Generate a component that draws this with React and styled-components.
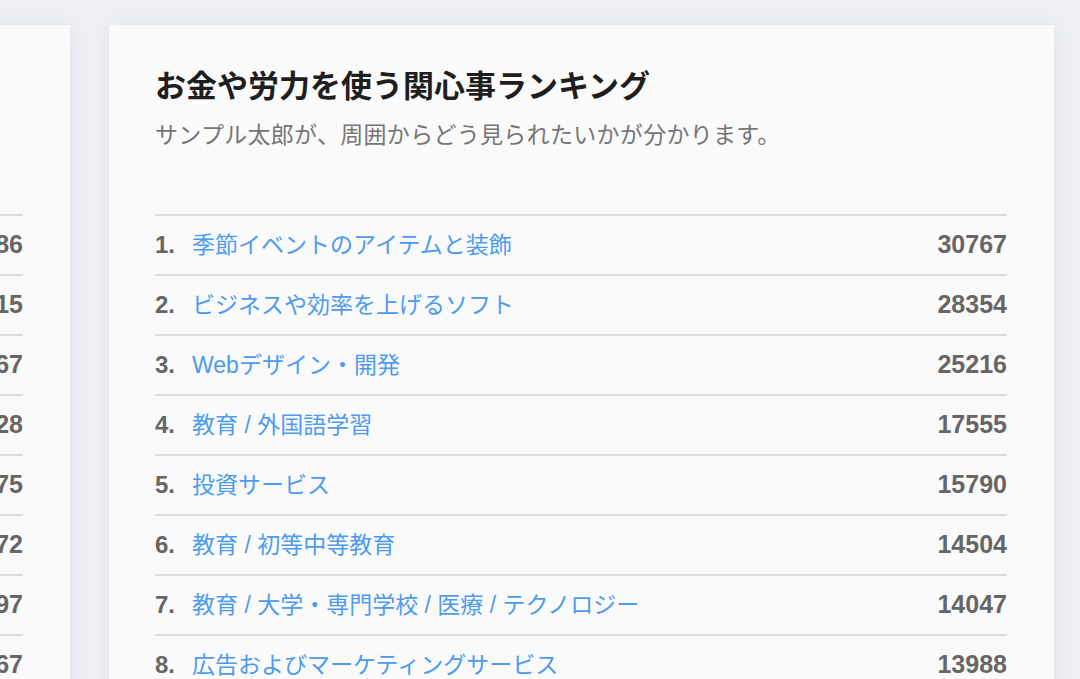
import React from "react";
import styled, { createGlobalStyle } from "styled-components";

const Global = createGlobalStyle`
  html, body { margin: 0; padding: 0; }
  body {
    background: #eef0f4;
    font-family: "Liberation Sans", "Noto Sans CJK JP", sans-serif;
    overflow: hidden;
  }
`;

const Page = styled.div`
  width: 1080px;
  height: 679px;
  overflow: hidden;
  display: flex;
  justify-content: flex-end;
  align-items: flex-start;
  gap: 39px;
  padding: 25px 26px 0 0;
  box-sizing: border-box;
`;

const Card = styled.section`
  flex: 0 0 945px;
  box-sizing: border-box;
  background: #fafafa;
  padding: 43px 47px 40px 46px;
  box-shadow: 0 0 18px rgba(140, 150, 180, 0.12);
  min-height: 700px;
`;

const Title = styled.h2`
  margin: 0;
  font-size: 31px;
  font-weight: 700;
  color: #1e1e1e;
  line-height: 38px;
`;

const Subtitle = styled.p`
  margin: 13px 0 0;
  font-size: 23px;
  letter-spacing: 0.3px;
  color: #767676;
  line-height: 32px;
`;

const List = styled.ol`
  list-style: none;
  margin: 63px 0 0;
  padding: 0;
`;

const Row = styled.li`
  display: flex;
  align-items: baseline;
  height: 60px;
  line-height: 56px;
  box-sizing: border-box;
  border-top: 2px solid #dcdcdc;
`;

const Rank = styled.span`
  font-size: 24px;
  font-weight: 700;
  color: #666;
  margin-right: 17px;
`;

const Label = styled.a`
  flex: 1;
  font-size: 23px;
  color: #4d9bf0;
  text-decoration: none;
`;

const Count = styled.span`
  font-size: 25px;
  font-weight: 700;
  color: #666;
`;

const leftItems = [
  ["旅行とアウトドア", 31286],
  ["グルメと料理", 29415],
  ["ファッション", 26367],
  ["健康とフィットネス", 18028],
  ["音楽と映画", 16175],
  ["書籍と雑誌", 15072],
  ["ゲーム", 14597],
  ["スポーツ", 13967],
];

const rightItems = [
  ["季節イベントのアイテムと装飾", 30767],
  ["ビジネスや効率を上げるソフト", 28354],
  ["Webデザイン・開発", 25216],
  ["教育 / 外国語学習", 17555],
  ["投資サービス", 15790],
  ["教育 / 初等中等教育", 14504],
  ["教育 / 大学・専門学校 / 医療 / テクノロジー", 14047],
  ["広告およびマーケティングサービス", 13988],
];

function Ranking({ title, subtitle, items }) {
  return (
    <Card>
      <Title>{title}</Title>
      <Subtitle>{subtitle}</Subtitle>
      <List>
        {items.map(([label, count], i) => (
          <Row key={label}>
            <Rank>{i + 1}.</Rank>
            <Label href="#">{label}</Label>
            <Count>{count}</Count>
          </Row>
        ))}
      </List>
    </Card>
  );
}

export default function App() {
  return (
    <>
      <Global />
      <Page>
        <Ranking
          title="興味関心ランキング"
          subtitle="サンプル太郎が、日頃から関心を持っていることが分かります。"
          items={leftItems}
        />
        <Ranking
          title="お金や労力を使う関心事ランキング"
          subtitle="サンプル太郎が、周囲からどう見られたいかが分かります。"
          items={rightItems}
        />
      </Page>
    </>
  );
}
